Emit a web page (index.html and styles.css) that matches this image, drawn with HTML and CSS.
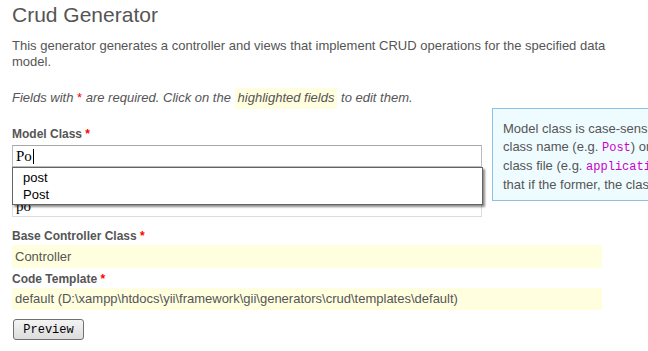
FILE: index.html
```html
<!DOCTYPE html>
<html lang="en">
<head>
  <meta charset="UTF-8" />
  <title>Crud Generator</title>
  <link rel="stylesheet" href="styles.css">
</head>
<body>

<div class="page">
  <h1>Crud Generator</h1>

  <p class="intro">This generator generates a controller and views that implement CRUD operations for the specified data model.</p>

  <p class="note">Fields with <span class="required">*</span> are required. Click on the <span class="sticky">highlighted fields</span> to edit them.</p>

  <form class="form" onsubmit="return false">
    <div class="row first">
      <label>Model Class <span class="required">*</span></label>
      <div class="text-input focused">Po<span class="caret"></span></div>

      <ul class="suggest">
        <li>post</li>
        <li>Post</li>
      </ul>

      <div class="hint">
        Model class is case-sensitive. It can be either a<br>
        class name (e.g. <code>Post</code>) or the path alias of the<br>
        class file (e.g. <code>application.models.Post</code>). Note<br>
        that if the former, the class must be auto-loadable.
      </div>
    </div>

    <div class="row second">
      <label>Controller ID <span class="required">*</span></label>
      <div class="text-input">po</div>
    </div>

    <div class="row sticky-row">
      <label>Base Controller Class <span class="required">*</span></label>
      <div class="sticky-value tall">Controller</div>
    </div>

    <div class="row sticky-row short">
      <label>Code Template <span class="required">*</span></label>
      <div class="sticky-value">default (D:\xampp\htdocs\yii\framework\gii\generators\crud\templates\default)</div>
    </div>

    <div class="buttons">
      <input type="submit" value="Preview" />
    </div>
  </form>
</div>

</body>
</html>
```

FILE: styles.css
```css
html, body {
  overflow: hidden;
}

body {
  margin: 0;
  font-family: "Liberation Sans", Arial, sans-serif;
  font-size: 13px;
  color: #555;
  background: #fff;
}

.page {
  padding: 2px 12px 0;
}

h1 {
  margin: 0;
  font-size: 21px;
  font-weight: normal;
  line-height: 25px;
}

.intro {
  margin: 11px 0 0;
  width: 610px;
  line-height: 16px;
}

.note {
  margin: 20px 0 0;
  font-style: italic;
  line-height: 16px;
}

.required {
  color: #f00;
  font-style: normal;
}

.sticky {
  background: #ffffe0;
  padding: 2px 3px 4px;
}

.form {
  margin-top: 20px;
}

.row {
  position: relative;
}

.row label {
  display: block;
  font-size: 12px;
  font-weight: bold;
  line-height: 16px;
}

.text-input {
  box-sizing: border-box;
  width: 470px;
  height: 22px;
  margin-top: 3px;
  padding: 0 3px;
  border: 1px solid #ddd;
  border-top-color: #c4c4c4;
  font-family: "Liberation Serif", "Times New Roman", serif;
  font-size: 15px;
  line-height: 20px;
  color: #000;
}

.text-input.focused {
  border-color: #bbb;
  border-top-color: #a8a8a8;
}

.caret {
  display: inline-block;
  width: 1px;
  height: 15px;
  margin-left: 1px;
  background: #000;
  vertical-align: -3px;
}

.suggest {
  position: absolute;
  top: 41px;
  left: 0;
  z-index: 2;
  width: 469px;
  height: 35px;
  margin: 0;
  padding: 1px 0 0;
  list-style: none;
  background: #fff;
  border: 1px solid #646464;
  box-shadow: 2px 2px 2px rgba(0, 0, 0, 0.45);
  color: #000;
}

.suggest li {
  padding-left: 10px;
  line-height: 17px;
}

.hint {
  position: absolute;
  top: -18px;
  left: 480px;
  box-sizing: border-box;
  width: 320px;
  height: 93px;
  padding: 11px 10px 0;
  background: #effcff;
  border: 1px solid #8cc0e4;
  line-height: 18px;
  white-space: nowrap;
}

.hint code {
  font-family: "Liberation Mono", Consolas, monospace;
  font-size: 12px;
  color: #c0c;
}

.row.second {
  margin-top: 9px;
}

.row.sticky-row {
  margin-top: 11px;
}

.row.sticky-row.short {
  margin-top: 3px;
}

.sticky-value {
  width: 587px;
  height: 22px;
  margin-top: 1px;
  padding-left: 3px;
  background: #ffffe0;
  line-height: 22px;
  white-space: nowrap;
}

.sticky-value.tall {
  height: 23px;
  line-height: 24px;
}

.buttons {
  margin-top: 9px;
}

.buttons input[type="submit"] {
  width: 71px;
  height: 21px;
  margin: 0 0 0 1px;
  padding: 0;
  border: 1px solid #707070;
  border-radius: 3px;
  background: linear-gradient(#f4f4f4, #dcdcdc);
  font-family: "Liberation Mono", "Courier New", monospace;
  font-size: 12px;
  color: #000;
  cursor: pointer;
}
```
